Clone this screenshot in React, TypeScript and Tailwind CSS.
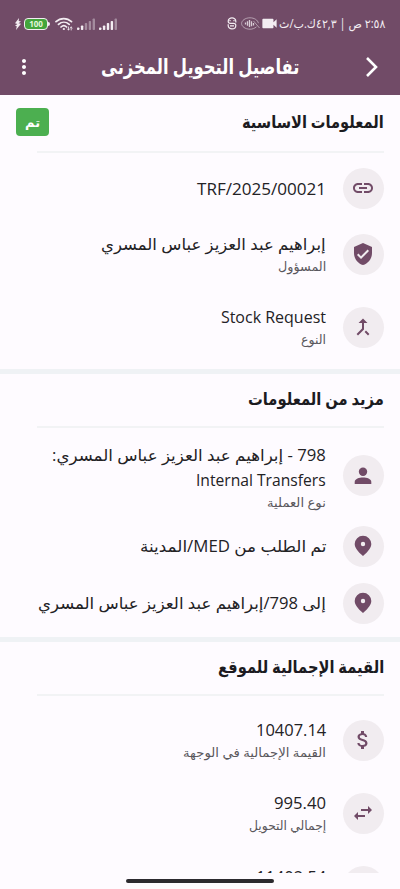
import React, { useLayoutEffect, useRef, useState } from "react";
import {
  MdAttachMoney,
  MdCallMerge,
  MdLink,
  MdMoreVert,
  MdSwapHoriz,
  MdVerifiedUser,
  MdVideocam,
} from "react-icons/md";
import clsx from "clsx";

interface Line {
  text: string;
  width: number;
  sub?: boolean;
}

// Keeps a single line of text at a given width, whatever font it falls back to
const FitText: React.FC<{ width: number; className?: string; children: React.ReactNode }> = ({
  width,
  className,
  children,
}) => {
  const ref = useRef<HTMLSpanElement>(null);
  const [scale, setScale] = useState(1);

  useLayoutEffect(() => {
    if (ref.current) setScale(width / ref.current.offsetWidth);
  }, [width]);

  return (
    <span
      ref={ref}
      className={clsx("block w-max shrink-0 origin-right whitespace-nowrap", className)}
      style={{ transform: `scaleX(${scale})` }}
    >
      {children}
    </span>
  );
};

const PinIcon = () => (
  <svg width="24" height="24" viewBox="0 0 24 24" fill="currentColor">
    <path
      fillRule="evenodd"
      d="M12 22C6.500 17.300 3.700 13.500 3.700 10A8.300 8.300 0 0 1 20.300 10c0 3.500-2.800 7.300-8.300 12Zm0-9.800a2.200 2.200 0 1 0 0-4.400 2.200 2.200 0 0 0 0 4.400Z"
    />
  </svg>
);

const PersonIcon = () => (
  <svg width="24" height="24" viewBox="0 0 24 24" fill="currentColor">
    <circle cx="12" cy="7.700" r="4.200" />
    <path d="M3.700 20v-2c0-3 4.500-4.400 8.300-4.400s8.300 1.400 8.300 4.400v2Z" />
  </svg>
);

const InfoRow: React.FC<{
  icon: React.ReactNode;
  lines: Line[];
  className: string;
  textClassName?: string;
}> = ({ icon, lines, className, textClassName }) => (
  <div className={clsx("flex shrink-0 items-center gap-[17px] px-4", className)}>
    <div className="flex size-[41px] shrink-0 items-center justify-center rounded-full bg-[#f1ecf0] pr-px text-[#714b67]">
      {icon}
    </div>
    <div className={clsx("flex w-0 flex-1 flex-col", textClassName)}>
      {lines.map((line) => (
        <FitText
          key={line.text}
          width={line.width}
          className={
            line.sub
              ? "text-[12.5px] leading-[19px] text-[#59575c]"
              : "text-[16px] leading-[25px] text-[#232225]"
          }
        >
          {line.text}
        </FitText>
      ))}
    </div>
  </div>
);

const SectionHeader: React.FC<{
  title: string;
  width: number;
  className: string;
  children?: React.ReactNode;
}> = ({ title, width, className, children }) => (
  <>
    <div className={clsx("flex shrink-0 items-center justify-between px-4 pb-[3px]", className)}>
      <FitText width={width} className="text-[17px] leading-6 font-bold text-[#1c1b1f]">
        {title}
      </FitText>
      {children}
    </div>
    <div className="mr-4 ml-[37px] h-[2px] shrink-0 bg-[#f2f3f5]" />
  </>
);

const Signal: React.FC<{ active: number }> = ({ active }) => (
  <svg width="18" height="12" viewBox="0 0 18 12" fill="#f3edf2">
    {[2.5, 4.5, 7, 9, 11.5].map((h, i) => (
      <rect key={h} x={i * 3.9} y={12 - h} width="2.4" height={h} rx="0.8" opacity={i < active ? 1 : 0.4} />
    ))}
  </svg>
);

const StatusBar = () => (
  <div className="flex h-[47px] items-center justify-between pr-[15px] pl-[15px] text-[#f3edf2]">
    <div className="flex items-center">
      <FitText width={106} className="text-[12px] leading-4">
        ٢:٥٨ ص | ٤٢,٣ك.ب/ث
      </FitText>
    </div>
    <div dir="ltr" className="flex flex-1 items-center">
      <svg width="6" height="12" viewBox="0 0 6 12" fill="#f3edf2">
        <path d="M4 0 0 5.2 2.4 6 0 7.8l1.8.5L1 12l5-6.2-2.5-.5L6 3.4l-2.3-.3Z" />
      </svg>
      <div className="ml-[3px] flex h-3 w-[24px] items-center justify-center rounded-[4px] border border-[#f3edf2] bg-[#43a53c] text-[8px] leading-none font-bold text-[#e4f7dc]">
        100
      </div>
      <span className="h-1 w-[1.5px] rounded-r bg-[#f3edf2]" />
      <svg className="ml-[5px]" width="18" height="14" viewBox="0 0 18 14" fill="none" stroke="#f3edf2" strokeWidth="1.7" strokeLinecap="round">
        <path d="M1 4.7C5.5.5 12 .5 16.5 4.7M3.5 7.400c3.200-2.900 7.600-2.900 10.700 0M6 10c1.700-1.600 4-1.600 5.600 0" />
        <path d="M8.800 12h.1" strokeWidth="2.2" />
        <path d="M13.500 10v3m-1-1 1 1 1-1M16.200 13v-3m-1 1 1-1 1 1" strokeWidth=".8" />
      </svg>
      <span className="ml-[4px]">
        <Signal active={2} />
      </span>
      <span className="ml-[4px]">
        <Signal active={4} />
      </span>
    </div>
  </div>
);

const StatusIcons = () => (
  <div dir="ltr" className="absolute top-[15px] left-[227px] flex h-4 items-center text-[#f3edf2]">
    <svg width="10" height="13" viewBox="0 0 10 13" fill="none" stroke="currentColor" strokeWidth="1.2">
      <path d="M8.800 5.500V4.200C8.800-.2 1.200-.2 1.200 4.200c0 1.500.8 2.200 2.300 2.200h3c1.500 0 2.300.6 2.300 2 0 4.600-7.600 4.600-7.600 0V7.300" />
      <path d="M3 3v1.200M7 3v1.200M3 8.800h4" />
    </svg>
    <svg className="ml-[4px] opacity-80" width="20" height="13" viewBox="0 0 20 13" fill="none" stroke="currentColor" strokeWidth="1">
      <path d="M15.500 9.800C13.500 11.500 11.300 12.200 9 12.200 4 12.200.6 9.300.6 6.500S4 .8 9 .8c4.200 0 7.800 2.200 8.400 5.400M12.500 4l6 7" opacity=".65" />
      <path d="M4.500 5.500v2M6.500 4.300v4.500M8.500 3v7M10.500 4.200v5M12.500 6v2.500" strokeWidth="1.3" />
    </svg>
    <MdVideocam className="-ml-px size-[19px]" />
  </div>
);

export default function App() {
  return (
    <div
      dir="rtl"
      className="relative h-[889px] w-[400px] overflow-hidden bg-[#fefbff] font-['Open_Sans','DejaVu_Sans',sans-serif]"
    >
      <header className="h-[95px] bg-[#714b67]">
        <StatusBar />
        <StatusIcons />
        <div className="flex h-10 items-center pr-[20px] pl-[13px] text-white">
          <svg width="17" height="22" viewBox="0 0 17 22" fill="none" stroke="currentColor" strokeWidth="2.6">
            <path d="m4 2 9 9-9 9" />
          </svg>
          <FitText width={198} className="mr-[64px] pb-0.5 text-[21px] leading-8 font-bold">
            تفاصيل التحويل المخزنى
          </FitText>
          <span className="flex-1" />
          <MdMoreVert size={24} className="absolute left-[12px]" />
        </div>
      </header>

      <main className="flex h-[778px] flex-col overflow-hidden">
        <SectionHeader title="المعلومات الاساسية" width={142} className="h-[56px]">
          <div className="flex h-7 w-[33px] items-center justify-center rounded-[4px] bg-[#4caf50] pt-0.5 text-[13px] font-semibold text-white">
            تم
          </div>
        </SectionHeader>
        <InfoRow
          className="h-[70px]"
          textClassName="pt-0.5"
          icon={<MdLink size={24} />}
          lines={[{ text: "TRF/2025/00021", width: 129 }]}
        />
        <InfoRow
          className="h-[62px]"
          icon={<MdVerifiedUser size={24} />}
          lines={[
            { text: "إبراهيم عبد العزيز عباس المسري", width: 225 },
            { text: "المسؤول", width: 48, sub: true },
          ]}
        />
        <InfoRow
          className="h-[84px]"
          icon={<MdCallMerge size={24} />}
          lines={[
            { text: "Stock Request", width: 105 },
            { text: "النوع", width: 25, sub: true },
          ]}
        />

        <div className="h-[5px] shrink-0 bg-[#eff2f5]" />

        <SectionHeader title="مزيد من المعلومات" width={136} className="h-[52px]" />
        <InfoRow
          className="h-[95px]"
          textClassName="pt-[4px]"
          icon={<PersonIcon />}
          lines={[
            { text: "798 - إبراهيم عبد العزيز عباس المسري:", width: 274 },
            { text: "Internal Transfers", width: 130 },
            { text: "نوع العملية", width: 59, sub: true },
          ]}
        />
        <InfoRow
          className="h-[46px]"
          icon={<PinIcon />}
          lines={[{ text: "تم الطلب من MED/المدينة", width: 186 }]}
        />
        <InfoRow
          className="h-[68px]"
          icon={<PinIcon />}
          lines={[{ text: "إلى 798/إبراهيم عبد العزيز عباس المسري", width: 288 }]}
        />

        <div className="h-[5px] shrink-0 bg-[#eff2f5]" />

        <SectionHeader title="القيمة الإجمالية للموقع" width={166} className="h-[52px]" />
        <InfoRow
          className="h-[88px]"
          icon={<MdAttachMoney size={24} />}
          lines={[
            { text: "10407.14", width: 70 },
            { text: "القيمة الإجمالية في الوجهة", width: 143, sub: true },
          ]}
        />
        <InfoRow
          className="h-[58px]"
          icon={<MdSwapHoriz size={24} />}
          lines={[
            { text: "995.40", width: 52 },
            { text: "إجمالي التحويل", width: 77, sub: true },
          ]}
        />
        {/* Next row, only its top edge is scrolled into view */}
        <InfoRow
          className="h-[88px]"
          textClassName="h-[43px]"
          icon={null}
          lines={[{ text: "11402.54", width: 70 }]}
        />
      </main>

      {/* Gesture bar */}
      <div className="mx-auto mt-[6px] h-1 w-[148px] rounded-full bg-[#2c2a2f]" />
    </div>
  );
}
